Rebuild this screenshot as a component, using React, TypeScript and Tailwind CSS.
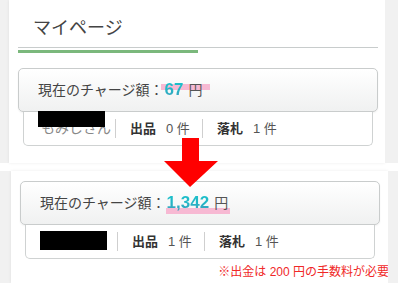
import React from "react";

type Stat = { label: string; count: number };

function ChargeCard({ amount, band }: { amount: string; band: "top" | "under" }) {
  return (
    <div className="flex h-[44px] items-center rounded-[5px] border border-[#c9cccc] bg-gradient-to-b from-white to-[#f0f1f1] pl-[19px] shadow-[0_1px_2px_rgba(0,0,0,0.06)]">
      <p className="text-[14px] leading-[20px] text-[#444]">
        現在のチャージ額：
        <span className="relative ml-[1px] inline-block leading-[20px]">
          <span
            className={
              band === "top"
                ? "absolute left-[-4px] right-[-7px] top-[4px] h-[6px] bg-[#f7b9d3]"
                : "absolute left-[-1px] right-[-2px] top-[15px] h-[6px] bg-[#f7b9d3]"
            }
          />
          <span className="relative bg-gradient-to-b from-[#18c4cc] via-[#22b6c6] to-[#3d9dbd] bg-clip-text text-[17px] font-bold text-transparent">
            {amount}
          </span>
          <span className="relative ml-[5px] text-[14px] text-[#555]">円</span>
        </span>
      </p>
    </div>
  );
}

function InfoRow({ name, stats, redactH }: { name: string; stats: Stat[]; redactH: string }) {
  return (
    <div className="relative mx-[5px] flex h-[34px] items-center rounded-b-[5px] border border-t-0 border-[#cfd2d2] bg-white pr-[6px] text-[13px] text-[#555]">
      <div className="w-[91px] shrink-0 pl-[17px] text-[14px] text-[#888]">{name}</div>
      {stats.map((s) => (
        <div key={s.label} className="flex items-center">
          <div className="h-[19px] w-px bg-[#cfcfcf]" />
          <div className="flex w-[86px] items-center pl-[14px]">
            <span className="font-bold text-[#333]">{s.label}</span>
            <span className="ml-[10px]">{s.count} 件</span>
          </div>
        </div>
      ))}
      <div className={`absolute left-[14px] w-[67px] bg-black ${redactH}`} />
    </div>
  );
}

export default function App() {
  return (
    <div className="relative h-[283px] w-[398px] overflow-hidden bg-white font-['Liberation_Sans','Noto_Sans_CJK_JP',sans-serif]">
      {/* before */}
      <div className="flex h-[163px]">
        <div className="w-[9px] bg-[#f1f1f1]" />
        <div className="flex-1 bg-white pl-[9px] pr-[7px] shadow-[0_0_3px_rgba(0,0,0,0.08)]">
          <h1 className="pl-[15px] pt-[15px] text-[18px] font-normal leading-[26px] text-[#444]">マイページ</h1>
          <div className="mt-[6px] h-px bg-[#c8cccc]" />
          <div className="mt-[2px] h-[3px] w-[180px] bg-[#7bb87c]" />
          <div className="mt-[15px]">
            <ChargeCard amount="67" band="top" />
            <InfoRow
              name="もみじさん"
              redactH="top-[-1px] h-[16px]"
              stats={[
                { label: "出品", count: 0 },
                { label: "落札", count: 1 },
              ]}
            />
          </div>
        </div>
        <div className="w-[13px] bg-[#f1f1f1]" />
      </div>

      <div className="h-[8px]" />

      {/* after */}
      <div className="flex h-[112px]">
        <div className="w-[11px] bg-[#f1f1f1]" />
        <div className="flex-1 bg-white pl-[9px] pr-[8px] pt-[10px] shadow-[0_0_3px_rgba(0,0,0,0.08)]">
          <ChargeCard amount="1,342" band="under" />
          <InfoRow
            name=""
            redactH="top-[6px] h-[19px]"
            stats={[
              { label: "出品", count: 1 },
              { label: "落札", count: 1 },
            ]}
          />
          <p className="-mr-[9px] mt-[5px] text-right text-[12px] leading-[16px] text-[#f02828]">
            ※出金は 200 円の手数料が必要
          </p>
        </div>
        <div className="w-[10px] bg-[#f1f1f1]" />
      </div>

      <svg className="absolute left-[164px] top-[138px]" width="54" height="49" viewBox="0 0 54 49">
        <path d="M18 0h17v23h19L26 49 0 23h18z" fill="#ff0000" />
      </svg>
    </div>
  );
}
